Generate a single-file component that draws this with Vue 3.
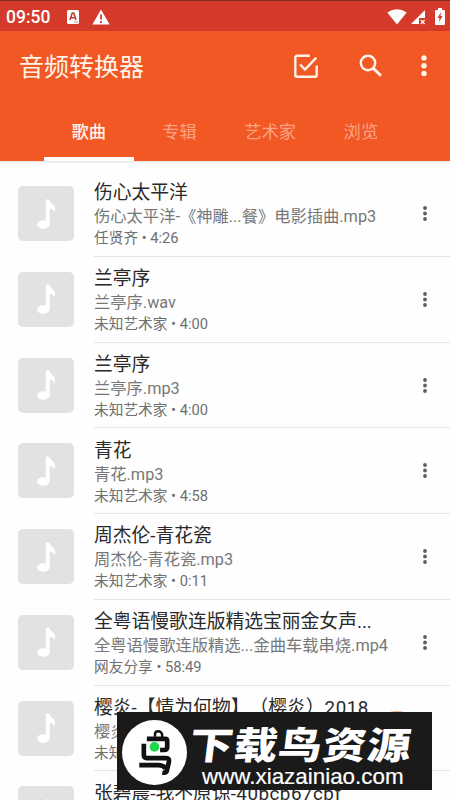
<script setup>
const tabs = ['歌曲', '专辑', '艺术家', '浏览']
const songs = [
  { title: '伤心太平洋', file: '伤心太平洋-《神雕...餐》电影插曲.mp3', meta: '任贤齐 • 4:26' },
  { title: '兰亭序', file: '兰亭序.wav', meta: '未知艺术家 • 4:00' },
  { title: '兰亭序', file: '兰亭序.mp3', meta: '未知艺术家 • 4:00' },
  { title: '青花', file: '青花.mp3', meta: '未知艺术家 • 4:58' },
  { title: '周杰伦-青花瓷', file: '周杰伦-青花瓷.mp3', meta: '未知艺术家 • 0:11' },
  { title: '全粤语慢歌连版精选宝丽金女声...', file: '全粤语慢歌连版精选...金曲车载串烧.mp4', meta: '网友分享 • 58:49' },
  { title: '樱炎-【情为何物】（樱炎）', tail: '2018...', file: '樱炎', meta: '未知' },
  { title: '张碧晨-我不原谅', tail: '-40bcb67cbf', file: '', meta: '' },
]
</script>

<template>
  <div class="screen">
    <div class="status">
      <span class="time">09:50</span>
      <svg class="s-a" viewBox="0 0 12 14"><rect width="12" height="14" rx="1.5" fill="#fff" /><path d="M3 10 5.2 3h1.6L9 10M4 7.7h4" fill="none" stroke="#bf3b2b" stroke-width="1.5" /><path d="M7 12h4" stroke="#dc8c82" /></svg>
      <svg class="s-warn" viewBox="0 0 18 16"><path d="M9 0.5 17.6 15.5H.4Z" fill="#fff" /><path d="M9 5.5v5M9 12v2" stroke="#d43a29" stroke-width="1.8" /></svg>
      <span class="grow"></span>
      <svg class="s-wifi" viewBox="0 0 20 16"><path d="M.3 3.5Q10-3 19.7 3.5L10 15.6Z" fill="#fff" /></svg>
      <svg class="s-sig" viewBox="0 0 14 15"><path d="M14 0v8H8v6H0Z" fill="#fff" /><path d="m9.8 10 3.8 4m0-4-3.8 4" stroke="#fff" stroke-width="1.2" /></svg>
      <svg class="s-bat" viewBox="0 0 10 17"><path d="M3 0h4v2h2q1 0 1 1v13q0 1-1 1H1q-1 0-1-1V3q0-1 1-1h2Z" fill="#fff" /><path d="M6 4 2.5 10h2L4 14l3.5-6h-2Z" fill="#d43a29" /></svg>
    </div>

    <header class="appbar">
      <div class="toolbar">
        <h1>音频转换器</h1>
        <svg class="i-check" viewBox="0 0 24 24"><path d="M15.8 1.800H3A1.700 1.700 0 0 0 1.300 3.500V21A1.700 1.700 0 0 0 3 22.700h18a1.700 1.700 0 0 0 1.700-1.700V11.500M6 10.500l5 5L22.300 3.700" fill="none" stroke="#fff3ea" stroke-width="2.400" /></svg>
        <svg class="i-search" viewBox="0 0 24 24"><circle cx="9" cy="9" r="7.2" fill="none" stroke="#fff3ea" stroke-width="2.4" /><path d="m14.2 14.2 7.8 7.6" stroke="#fff3ea" stroke-width="3" /></svg>
        <svg class="i-more" viewBox="0 0 6 22"><circle cx="3" cy="3" r="2.7" /><circle cx="3" cy="10.7" r="2.7" /><circle cx="3" cy="18.5" r="2.7" /></svg>
      </div>
      <nav class="tabs">
        <span v-for="(tab, i) in tabs" :key="tab" class="tab" :class="{ active: i === 0 }">{{ tab }}</span>
      </nav>
    </header>

    <main class="list">
      <article v-for="(song, i) in songs" :key="i" class="row">
        <div class="thumb">
          <svg viewBox="0 0 18 30"><ellipse cx="6.300" cy="25.500" rx="6.200" ry="4.300" /><path d="M8.700 26V2Q8.700.2 10.500.2q2 0 2.500 1.800.5 1.800 2.700 3.200Q18 6.700 18 9.200v4.300q-1.200-3.300-5.300-3.800V26Z" /></svg>
        </div>
        <div class="info">
          <div class="text">
            <div class="title">{{ song.title }}<span v-if="song.tail" class="tail">{{ song.tail }}</span></div>
            <div class="file">{{ song.file }}</div>
            <div class="meta">{{ song.meta }}</div>
          </div>
          <svg class="dots" viewBox="0 0 4 15"><circle cx="2" cy="2" r="1.9" /><circle cx="2" cy="7.5" r="1.9" /><circle cx="2" cy="13" r="1.9" /></svg>
        </div>
      </article>
    </main>

    <div class="fab"></div>
    <div class="banner">
      <svg class="logo" viewBox="0 0 64 64">
        <circle cx="32" cy="32" r="32" fill="#fff" />
        <g fill="none" stroke="#111" stroke-width="4.6" stroke-linejoin="round">
          <path d="M32.500 16.500v-2.500q0-3 3-3t4 3v3" stroke-width="2.400" />
          <path d="M24.500 18.500h18q2 0 2 2v6q0 3-3 3h-4" />
          <path d="M21.500 23.500v11q0 3 3 3h19q3.500 0 2.600 4l-1.800 8q-.600 3-4.600 2.300" />
          <path d="M17 44.500h19q4 0 7 3" />
        </g>
        <circle cx="32" cy="26.500" r="4.800" fill="#1fd64f" />
      </svg>
      <div class="brand">
        <div class="name">下载鸟资源</div>
        <div class="url">www.xiazainiao.com</div>
      </div>
    </div>
  </div>
</template>

<style>
body { margin: 0; overflow: hidden; }
</style>

<style scoped>
.screen { position: relative; width: 450px; height: 800px; overflow: hidden; background: #fefefe; font-family: Roboto, "Noto Sans CJK SC", sans-serif; text-spacing-trim: space-all; }
svg { display: block; flex: none; }
.status { display: flex; align-items: center; box-sizing: border-box; height: 31px; border-top: 1px solid #7c2824; padding: 2px 5px 0 6px; background: #d43a29; color: #fff; }
.time { width: 61px; font-size: 17.5px; line-height: 28px; font-weight: 500; }
.s-a { width: 12px; height: 14px; }
.s-warn { width: 18px; height: 16px; margin-left: 13px; }
.grow { flex: 1; }
.s-wifi { width: 20px; height: 16px; margin-bottom: 1px; }
.s-sig { width: 14px; height: 15px; margin-left: 4px; }
.s-bat { width: 10px; height: 17px; margin: 0 0 2px 10px; }
.appbar { height: 130px; background: #f15824; color: #fff3ea; box-shadow: 0 1px 2px rgba(0, 0, 0, .12); }
.toolbar { display: flex; align-items: center; height: 70px; padding: 0 23px 0 19px; }
h1 { flex: 1; margin: 0; font-size: 25px; line-height: 30px; font-weight: 400; padding-top: 4px; }
.i-check { width: 24px; height: 24px; margin-right: 1px; margin-left: -1px; }
.i-search { width: 24px; height: 24px; margin-left: 40px; }
.i-more { width: 6px; height: 22px; margin-left: 38px; fill: #fff3ea; }
.tabs { display: flex; height: 60px; padding-left: 43.500px; }
.tab { box-sizing: border-box; width: 90.700px; height: 60px; padding-top: 19px; line-height: 24px; font-size: 17.3px; text-align: center; color: #fba384; }
.tab.active { color: #fff3ea; font-weight: 500; border-bottom: 4px solid #fff; }
.list { padding-top: 10px; }
.row { display: flex; height: 85.75px; padding-left: 18px; }
.thumb { display: flex; align-items: center; justify-content: center; flex: none; width: 56px; height: 55px; margin-top: 15px; border-radius: 5px; background: #e2e2e4; }
.thumb svg { width: 18px; height: 30px; fill: #fff; }
.info { flex: 1; display: flex; justify-content: space-between; box-sizing: border-box; margin-left: 20px; border-bottom: 1px solid #e5e5e5; padding-right: 23px; }
.text { padding-top: 10.400px; white-space: nowrap; }
.title { height: 24px; line-height: 25px; font-size: 18.8px; color: #292929; }
.tail { letter-spacing: .5px; }
.file { height: 23px; line-height: 23px; font-size: 16.3px; color: #777; }
.meta { height: 21px; line-height: 21px; font-size: 14.7px; color: #6f6f6f; }
.dots { width: 4px; height: 15px; margin-top: 35px; fill: #5e5e5e; }
.fab { position: absolute; left: 369px; top: 711px; width: 56px; height: 56px; border-radius: 50%; background: #f7a983; }
.banner { position: absolute; left: 117px; top: 712px; display: flex; box-sizing: border-box; width: 315px; height: 78px; padding: 8px 0 0 5px; background: #1a1a1a; color: #fff; }
.logo { width: 65px; height: 65px; }
.brand { margin-left: 3px; }
.name { height: 45px; line-height: 45px; font-family: "Noto Sans CJK SC", sans-serif; font-weight: 900; font-size: 37.500px; letter-spacing: .8px; transform-origin: 0 50%; transform: skewX(-7deg) scaleX(1.16); white-space: nowrap; }
.url { margin: -1px 0 0 12px; font-family: "Liberation Sans", sans-serif; font-size: 22.400px; line-height: 26px; -webkit-text-stroke: 0.2px #fff; }
</style>
